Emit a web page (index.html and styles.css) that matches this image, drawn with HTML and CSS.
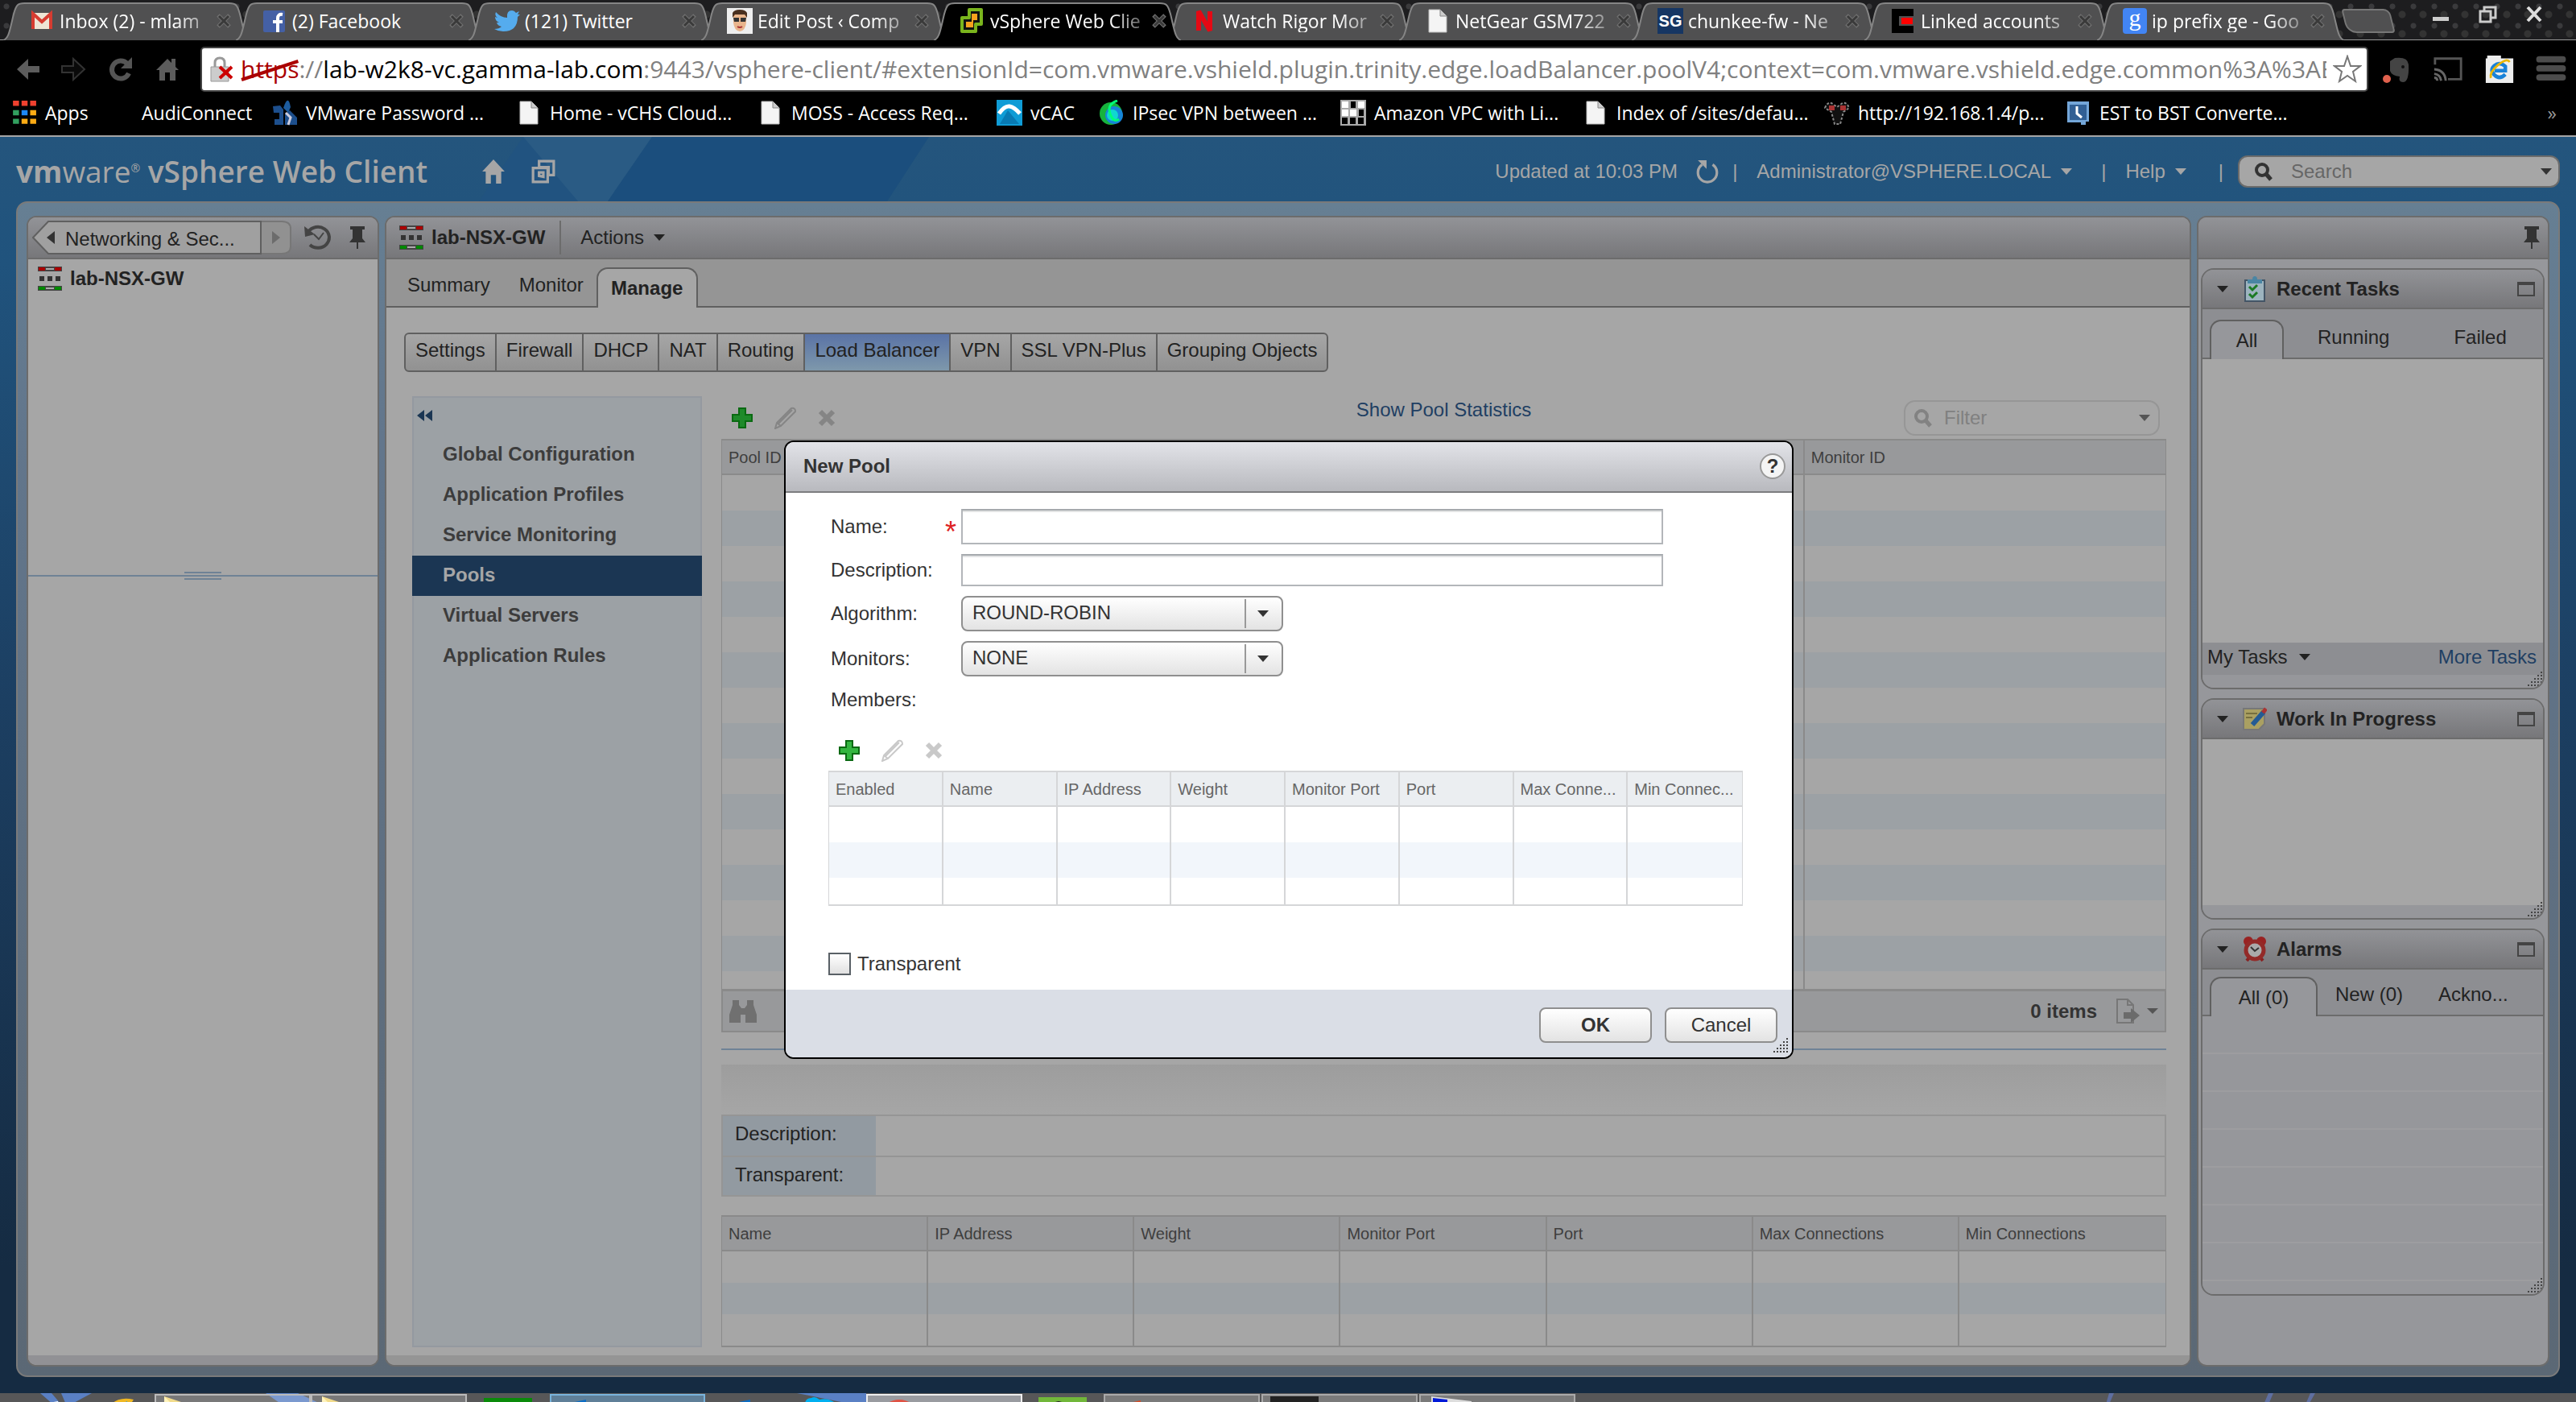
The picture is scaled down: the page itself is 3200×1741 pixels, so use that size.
FILE: index.html
```
<!DOCTYPE html>
<html lang="en">

<head>
    <meta charset="UTF-8">
    <meta name="viewport" content="width=device-width, initial-scale=1.0">
    <title>vSphere Web Client</title>
    <link rel="stylesheet" href="styles.css">
</head>

<body>
    <!-- shared icons -->
    <svg class="defs" aria-hidden="true">
        <symbol id="tab-shape" viewBox="0 0 306 46" preserveAspectRatio="none">
            <path d="M0 46C7 44 8 34 13 14C16 3 18 1 26 1H280C288 1 290 3 293 14C298 34 299 44 306 46" stroke-width="2" />
        </symbol>
        <symbol id="close" viewBox="0 0 18 18">
            <path d="M2 2L16 16M16 2L2 16" stroke="#707070" stroke-width="5" />
            <path d="M3 3L15 15M15 3L3 15" stroke="#3a3a3a" stroke-width="3" />
        </symbol>
        <symbol id="page" viewBox="0 0 28 32">
            <path d="M3 2H17L25 10V30H3Z" fill="#f4f4f4" stroke="#bbb" />
            <path d="M17 2V10H25" fill="#ccc" stroke="#888" />
        </symbol>
        <symbol id="gateway" viewBox="0 0 30 30">
            <path d="M0 0H30V6H0Z" fill="#444" />
            <path d="M1 1H9V5H1ZM21 1H29V5H21Z" fill="#a00" />
            <path d="M10 2H20V4H10Z" fill="#aaa" />
            <path d="M2 12H8V18H2ZM12 12H18V18H12ZM22 12H28V18H22Z" fill="#333" />
            <path d="M0 24H30V30H0Z" fill="#444" />
            <path d="M1 25H9V29H1ZM21 25H29V29H21Z" fill="#080" />
            <path d="M10 26H20V28H10Z" fill="#aaa" />
        </symbol>
        <symbol id="pin" viewBox="0 0 20 28">
            <path d="M1 0H19V4H16V15L20 20H0L4 15V4H1Z" fill="currentColor" />
            <path d="M9 20H11V28H9Z" fill="currentColor" />
        </symbol>
        <symbol id="plus" viewBox="0 0 28 28">
            <path d="M10 2H18V10H26V18H18V26H10V18H2V10H10Z" fill="currentColor" stroke="#0a6a12" stroke-width="2" />
        </symbol>
        <symbol id="pencil" viewBox="0 0 28 28">
            <path d="M1 27L3 20L21 2Q26 1 26 6L8 24ZM5 21L22 4M3 20L8 24" fill="none" stroke="currentColor" stroke-width="2" />
        </symbol>
        <symbol id="cross" viewBox="0 0 22 22">
            <path d="M3 3L19 19M19 3L3 19" stroke="currentColor" stroke-width="6" />
        </symbol>
        <symbol id="magnifier" viewBox="0 0 24 24">
            <circle cx="10" cy="10" r="7" fill="none" stroke="currentColor" stroke-width="4" />
            <path d="M15 15L21 22" stroke="currentColor" stroke-width="5" />
        </symbol>
        <symbol id="caret" viewBox="0 0 14 8">
            <path d="M0 0H14L7 8Z" fill="currentColor" />
        </symbol>
        <symbol id="grip" viewBox="0 0 20 20">
            <path d="M18 0V20M14 4V20M10 8V20M6 12V20M2 16V20" stroke="currentColor" stroke-width="2" stroke-dasharray="2 2" />
        </symbol>
        <symbol id="maximize" viewBox="0 0 22 18">
            <path d="M1 2H21V17H1Z" fill="none" stroke="#444" stroke-width="2" />
            <path d="M0 0H22V4H0Z" fill="#444" />
        </symbol>
        <symbol id="folder" viewBox="0 0 40 14">
            <path d="M0 14V0L24 8Q34 10 36 14Z" fill="#f2dc8c" />
            <path d="M0 0L14 14H0Z" fill="#fff3bd" />
        </symbol>
    </svg>

    <header class="browser">
        <div class="tab-strip">
            <div class="tab">
                <svg class="shape"><use href="#tab-shape" /></svg>
                <svg class="fav" viewBox="0 0 32 32"><path d="M3 6H29V26H3Z" fill="#eee5d5" /><path d="M5 26V7L16 17L27 7V26" fill="none" stroke="#d63c31" stroke-width="4" /></svg>
                <span class="name fade">Inbox (2) - mlam</span>
                <button class="close" aria-label="Close tab"><svg><use href="#close" /></svg></button>
            </div>
            <div class="tab">
                <svg class="shape"><use href="#tab-shape" /></svg>
                <svg class="fav" viewBox="0 0 32 32"><rect x="2" y="3" width="27" height="27" rx="2" fill="#4460a5" /><path d="M26 8Q20 7 20 13V30M14 17H26" fill="none" stroke="#fff" stroke-width="4" /></svg>
                <span class="name">(2) Facebook</span>
                <button class="close" aria-label="Close tab"><svg><use href="#close" /></svg></button>
            </div>
            <div class="tab">
                <svg class="shape"><use href="#tab-shape" /></svg>
                <svg class="fav" viewBox="0 0 32 32"><path d="M2 5Q8 12 16 12Q15 3 22 3Q25 3 27 6L31 4L29 8L32 8L29 11Q29 29 11 29Q5 29 0 26Q6 26 9 23Q4 22 3 18H6Q1 16 1 11L4 12Q0 9 2 5Z" fill="#55acee" /></svg>
                <span class="name">(121) Twitter</span>
                <button class="close" aria-label="Close tab"><svg><use href="#close" /></svg></button>
            </div>
            <div class="tab">
                <svg class="shape"><use href="#tab-shape" /></svg>
                <svg class="fav" viewBox="0 0 32 32"><path d="M0 0H32V32H0Z" fill="#eee" /><path d="M8 8H24V18Q23 28 16 29Q9 28 8 18Z" fill="#e9b58c" /><path d="M7 12V6Q9 2 16 2T25 6V12L22 8H10Z" fill="#49301f" /><path d="M8 12H15V17H9ZM17 12H24L23 17H17Z" fill="#333" /><path d="M13 23Q16 25 19 23" fill="none" stroke="#a33" stroke-width="2" /></svg>
                <span class="name fade">Edit Post ‹ Comp</span>
                <button class="close" aria-label="Close tab"><svg><use href="#close" /></svg></button>
            </div>
            <div class="tab active">
                <svg class="shape"><use href="#tab-shape" /></svg>
                <svg class="fav" viewBox="0 0 32 32"><path d="M12 2H27V20H20V29H3V12H12Z" fill="#111" stroke="#7ab51d" stroke-width="4" stroke-linejoin="round" /><path d="M15 7H22V15H17V24H8V17H15Z" fill="#f8a11d" /></svg>
                <span class="name fade">vSphere Web Clie</span>
                <button class="close" aria-label="Close tab"><svg><use href="#close" /></svg></button>
            </div>
            <div class="tab">
                <svg class="shape"><use href="#tab-shape" /></svg>
                <svg class="fav" viewBox="0 0 32 32"><path d="M8 28V4L22 28V4" fill="none" stroke="#e50914" stroke-width="6" stroke-linejoin="bevel" /></svg>
                <span class="name fade">Watch Rigor Mor</span>
                <button class="close" aria-label="Close tab"><svg><use href="#close" /></svg></button>
            </div>
            <div class="tab">
                <svg class="shape"><use href="#tab-shape" /></svg>
                <svg class="fav"><use href="#page" /></svg>
                <span class="name fade">NetGear GSM722</span>
                <button class="close" aria-label="Close tab"><svg><use href="#close" /></svg></button>
            </div>
            <div class="tab">
                <svg class="shape"><use href="#tab-shape" /></svg>
                <span class="fav fav-sg">SG</span>
                <span class="name fade">chunkee-fw - Ne</span>
                <button class="close" aria-label="Close tab"><svg><use href="#close" /></svg></button>
            </div>
            <div class="tab">
                <svg class="shape"><use href="#tab-shape" /></svg>
                <svg class="fav" viewBox="0 0 32 32"><path d="M2 1H29V10H11V22H29V31H2Z" fill="#000" /><path d="M14 12H28V20H14Z" fill="#f00" /></svg>
                <span class="name fade">Linked accounts</span>
                <button class="close" aria-label="Close tab"><svg><use href="#close" /></svg></button>
            </div>
            <div class="tab">
                <svg class="shape"><use href="#tab-shape" /></svg>
                <span class="fav fav-google">g</span>
                <span class="name fade">ip prefix ge - Goo</span>
                <button class="close" aria-label="Close tab"><svg><use href="#close" /></svg></button>
            </div>
            <button class="new-tab" aria-label="New tab"></button>
            <div class="window-buttons">
                <button aria-label="Minimize"><svg viewBox="0 0 24 24"><path d="M2 15H22V20H2Z" fill="#ccc" /></svg></button>
                <button aria-label="Restore"><svg viewBox="0 0 24 24"><path d="M8 7V3H22V16H17M3 8H16V21H3Z" fill="none" stroke="#ccc" stroke-width="3" /></svg></button>
                <button aria-label="Close"><svg viewBox="0 0 24 24"><path d="M4 3L20 20M20 3L4 20" stroke="#ddd" stroke-width="4" /></svg></button>
            </div>
        </div>

        <div class="toolbar">
            <button aria-label="Back"><svg viewBox="0 0 32 32"><path d="M17 3L3 16L17 29V20H31V12H17Z" fill="#5c5c5c" /></svg></button>
            <button aria-label="Forward"><svg viewBox="0 0 32 32"><path d="M15 3L29 16L15 29V20H1V12H15Z" fill="#0a0a0a" stroke="#333" stroke-width="2" /></svg></button>
            <button aria-label="Reload"><svg viewBox="0 0 32 32"><path d="M26 21A11 11 0 1 1 24 9" fill="none" stroke="#555" stroke-width="6" /><path d="M30 1V15H16Z" fill="#555" /></svg></button>
            <button aria-label="Home"><svg viewBox="0 0 32 32"><path d="M2 17L16 3L21 8V3H26V13L30 17H26V30H19V20H13V30H6V17Z" fill="#5c5c5c" /></svg></button>
            <div class="url-box">
                <svg class="lock" viewBox="0 0 30 32"><path d="M6 14V8Q6 2 12 2T18 8V14" fill="none" stroke="#999" stroke-width="3" /><path d="M1 13H23V31H1Z" fill="#ccc" stroke="#999" /><path d="M12 13L27 27M27 13L12 27" stroke="#c00" stroke-width="4" /></svg>
                <div class="url"><span class="scheme">https<svg viewBox="0 0 70 28" preserveAspectRatio="none"><path d="M1 26L69 3" stroke="#a00" stroke-width="4" /></svg></span>://<span class="host">lab-w2k8-vc.gamma-lab.com</span>:9443/vsphere-client/#extensionId=com.vmware.vshield.plugin.trinity.edge.loadBalancer.poolV4;context=com.vmware.vshield.edge.common%3A%3AE</div>
                <button class="star" aria-label="Bookmark"><svg viewBox="0 0 36 36"><path d="M18 2L22 14H34L25 21L28 33L18 26L8 33L11 21L2 14H14Z" fill="#fff" stroke="#777" stroke-width="2" /></svg></button>
            </div>
            <div class="extensions">
                <button aria-label="Notes"><svg viewBox="0 0 36 36"><path d="M10 8L16 4Q32 2 33 12Q34 34 26 34Q20 34 22 27Q12 26 10 20Z" fill="#444" /><circle cx="26" cy="15" r="2" fill="#111" /><circle cx="6" cy="30" r="5" fill="#e0614d" /></svg></button>
                <button aria-label="Cast"><svg viewBox="0 0 40 36"><path d="M3 12V4H37V31H20" fill="none" stroke="#555" stroke-width="3" /><path d="M2 18Q16 19 17 33M2 24Q10 25 11 33M2 29Q6 29 6 33" fill="none" stroke="#666" stroke-width="3" /></svg></button>
                <button aria-label="IE Tab"><svg viewBox="0 0 40 40"><path d="M1 5H3V1H22V5H39V39H1Z" fill="#eee" /><path d="M28 27Q20 35 13 28T13 15T28 16V22H13" fill="none" stroke="#1982d8" stroke-width="5" /><path d="M8 32Q6 24 18 14T34 10" fill="none" stroke="#e9b600" stroke-width="3" /></svg></button>
                <button aria-label="Menu"><svg viewBox="0 0 34 32"><path d="M4 5H30M4 15H30M4 25H30" stroke="#4c4c4c" stroke-width="7" stroke-linecap="round" /></svg></button>
            </div>
        </div>

        <nav class="bookmarks">
            <a href="#"><svg class="fav" viewBox="0 0 30 30"><path d="M2 1H9V7H2ZM12 1H19V7H12ZM22 1H29V7H22Z" fill="#f0412f" /><path d="M2 12H9V18H2ZM2 22H9V28H2Z" fill="#32a05f" /><path d="M12 12H19V18H12Z" fill="#1d87f5" /><path d="M22 12H29V18H22ZM12 22H19V28H12ZM22 22H29V28H22Z" fill="#fbab14" /></svg>Apps</a>
            <a href="#">AudiConnect</a>
            <a href="#"><svg class="fav" viewBox="0 0 32 32"><path d="M14 10Q20 -8 23 9L20 16Z" fill="#1d5c9f" /><path d="M1 8L10 7L14 12V31H3V24H9V16H2ZM16 18L22 13L31 22V31H16Z" fill="#1d4f8d" /><path d="M17 16L23 22L20 31" fill="none" stroke="#ccd" stroke-width="3" /></svg>VMware Password ...</a>
            <a href="#"><svg class="fav"><use href="#page" /></svg>Home - vCHS Cloud...</a>
            <a href="#"><svg class="fav"><use href="#page" /></svg>MOSS - Access Req...</a>
            <a href="#"><svg class="fav" viewBox="0 0 32 32"><path d="M0 0H32V32H0Z" fill="#0f9cd6" /><path d="M3 17Q10 7 16 8T29 17" fill="none" stroke="#fff" stroke-width="5" /><path d="M4 30L14 13L28 30Z" fill="#087ab3" /></svg>vCAC</a>
            <a href="#"><svg class="fav" viewBox="0 0 32 32"><circle cx="15" cy="17" r="14" fill="#17b33d" /><circle cx="19" cy="19" r="11" fill="#1685d8" /><circle cx="17" cy="19" r="7" fill="#10d7d0" /><path d="M23 1Q10 5 14 17T25 24" fill="none" stroke="#0f7" stroke-width="3" /></svg>IPsec VPN between ...</a>
            <a href="#"><svg class="fav" viewBox="0 0 32 32"><path d="M0 0H32V32H0Z" fill="#aaa" /><path d="M2 2H10V10H2ZM22 2H30V10H22ZM2 12H10V20H2ZM12 12H20V20H12Z" fill="#fff" /><path d="M13 2H19V10H13ZM23 12H29V20H23ZM2 22H9V30H2ZM12 22H19V30H12ZM22 22H29V30H22Z" fill="#000" /></svg>Amazon VPC with Li...</a>
            <a href="#"><svg class="fav"><use href="#page" /></svg>Index of /sites/defau...</a>
            <a href="#"><svg class="fav" viewBox="0 0 32 32"><path d="M1 10Q5 0 12 6L16 9L20 6Q27 0 31 10L24 15L20 30H13L9 15Z" fill="#111" stroke="#888" stroke-width="2" stroke-dasharray="3 2" /><path d="M6 7H13V13H6ZM20 7H27V13H20Z" fill="#a33" /></svg>http://192.168.1.4/p...</a>
            <a href="#"><svg class="fav" viewBox="0 0 32 32"><path d="M2 2H29V27H25V31H19V28H2Z" fill="#74a6d8" /><path d="M5 6H26V25H5Z" fill="#315f94" /><path d="M14 8V17L20 22" fill="none" stroke="#fff" stroke-width="3" /></svg>EST to BST Converte...</a>
            <button class="more" aria-label="More bookmarks">»</button>
        </nav>
    </header>

    <main class="app">
        <svg class="wedges" viewBox="0 0 1200 80" aria-hidden="true">
            <path d="M650 0L595 80H720Z" fill="#215380" />
            <path d="M650 0H810L755 80H718Z" fill="#2a5b84" />
            <path d="M810 0H1154L1102 80H755Z" fill="#1b4e7d" />
        </svg>

        <div class="app-header">
            <h1><b>vm</b>ware<sup>®</sup> <span>vSphere Web Client</span></h1>
            <button aria-label="Home"><svg class="head-icon" viewBox="0 0 28 28"><path d="M14 0L27 14H23V28H17V18H11V28H5V14H1Z" fill="#a6a6a6" /></svg></button>
            <button aria-label="Copy view"><svg class="head-icon" viewBox="0 0 28 28"><path d="M9 2H26V18H20V9H9ZM2 10H19V26H2ZM9 19V15H14V20Z" fill="none" stroke="#a6a6a6" stroke-width="3" /></svg></button>
            <div class="session">
                <span>Updated at 10:03 PM</span>
                <button class="refresh" aria-label="Refresh"><svg class="head-icon" viewBox="0 0 28 28"><path d="M8 6A11 11 0 1 0 20 6" fill="none" stroke="#a6a6a6" stroke-width="3" /><path d="M3 1H13V11Z" fill="#a6a6a6" /></svg></button>
                <span class="bar">|</span>
                <button class="user">Administrator@VSPHERE.LOCAL <svg class="caret"><use href="#caret" /></svg></button>
                <span class="bar">|</span>
                <button class="help-menu">Help <svg class="caret"><use href="#caret" /></svg></button>
                <span class="bar">|</span>
            </div>
            <label class="search">
                <svg class="magnifier"><use href="#magnifier" /></svg>
                <input type="text" placeholder="Search" aria-label="Search">
                <svg class="caret"><use href="#caret" /></svg>
            </label>
        </div>

        <div class="frame">
            <!-- navigator -->
            <aside class="panel navigator">
                <div class="panel-head">
                    <div class="crumbs">
                        <svg viewBox="0 0 322 42" preserveAspectRatio="none"><path d="M284 1H310Q321 1 321 10V32Q321 41 310 41H284Z" fill="#919191" stroke="#777" stroke-width="2" /><path d="M1 21L20 1H284V41H20Z" fill="#a0a0a0" stroke="#606060" stroke-width="2" /><path d="M18 21L28 13V29Z" fill="#333" /><path d="M298 13L308 21L298 29Z" fill="#6c6c6c" /></svg>
                        <button>Networking &amp; Sec...</button>
                    </div>
                    <button aria-label="History"><svg class="history" viewBox="0 0 34 32"><path d="M5 9A14 13 0 1 1 7 25" fill="none" stroke="#444" stroke-width="4" /><path d="M0 2L13 12L1 15Z" fill="#444" /><path d="M12 12L18 18L24 10" fill="none" stroke="#444" stroke-width="2" /></svg></button>
                    <button aria-label="Pin"><svg class="pin"><use href="#pin" /></svg></button>
                </div>
                <div class="tree"><a href="#"><svg class="gateway"><use href="#gateway" /></svg>lab-NSX-GW</a></div>
                <div class="splitter"><i></i></div>
                <div class="tree-rest"></div>
                <div class="panel-foot"></div>
            </aside>

            <!-- object view -->
            <section class="panel content">
                <div class="panel-head">
                    <svg class="gateway"><use href="#gateway" /></svg>
                    <h2>lab-NSX-GW</h2>
                    <button class="actions">Actions <svg class="caret"><use href="#caret" /></svg></button>
                </div>
                <div class="main-tabs">
                    <button>Summary</button>
                    <button>Monitor</button>
                    <button class="active">Manage</button>
                </div>
                <div class="sub-tabs">
                    <button>Settings</button><button>Firewall</button><button>DHCP</button><button>NAT</button><button>Routing</button><button class="active">Load Balancer</button><button>VPN</button><button>SSL VPN-Plus</button><button>Grouping Objects</button>
                </div>
                <div class="work">
                    <nav class="side-nav">
                        <button class="collapse" aria-label="Collapse"><svg viewBox="0 0 20 14"><path d="M9 0V14L0 7ZM19 0V14L10 7Z" fill="#1b3653" /></svg></button>
                        <a href="#">Global Configuration</a>
                        <a href="#">Application Profiles</a>
                        <a href="#">Service Monitoring</a>
                        <a href="#" class="active">Pools</a>
                        <a href="#">Virtual Servers</a>
                        <a href="#">Application Rules</a>
                    </nav>
                    <div class="pools">
                        <div class="grid-tools">
                            <div class="icons">
                                <button aria-label="Add"><svg class="plus"><use href="#plus" /></svg></button>
                                <button aria-label="Edit"><svg class="pencil"><use href="#pencil" /></svg></button>
                                <button aria-label="Delete"><svg class="cross"><use href="#cross" /></svg></button>
                            </div>
                            <a href="#">Show Pool Statistics</a>
                            <label class="filter">
                                <svg class="magnifier"><use href="#magnifier" /></svg>
                                <input type="text" placeholder="Filter" aria-label="Filter">
                                <svg class="caret"><use href="#caret" /></svg>
                            </label>
                        </div>
                        <table class="grid">
                            <thead><tr><th>Pool ID</th><th>Name</th><th>Algorithm</th><th>Monitor ID</th></tr></thead>
                            <tbody>
                                <tr><td></td><td></td><td></td><td></td></tr>
                                <tr><td></td><td></td><td></td><td></td></tr>
                                <tr><td></td><td></td><td></td><td></td></tr>
                                <tr><td></td><td></td><td></td><td></td></tr>
                                <tr><td></td><td></td><td></td><td></td></tr>
                                <tr><td></td><td></td><td></td><td></td></tr>
                                <tr><td></td><td></td><td></td><td></td></tr>
                                <tr><td></td><td></td><td></td><td></td></tr>
                                <tr><td></td><td></td><td></td><td></td></tr>
                                <tr><td></td><td></td><td></td><td></td></tr>
                                <tr><td></td><td></td><td></td><td></td></tr>
                                <tr><td></td><td></td><td></td><td></td></tr>
                                <tr><td></td><td></td><td></td><td></td></tr>
                                <tr><td></td><td></td><td></td><td></td></tr>
                                <tr class="cut"><td></td><td></td><td></td><td></td></tr>
                            </tbody>
                        </table>
                        <div class="grid-foot">
                            <button aria-label="Find"><svg class="binoculars" viewBox="0 0 34 28"><path d="M4 0H12V6L15 10H19L22 6V0H30V6L34 18V28H20V18H14V28H0V18L4 6Z" fill="#707070" /></svg></button>
                            <b>0 items</b>
                            <button aria-label="Export"><svg class="export" viewBox="0 0 52 32"><path d="M1 1H14L21 8V30H1ZM14 1V8H21" fill="none" stroke="#777" stroke-width="2" /><path d="M9 17H18V12L29 21L18 30V25H9Z" fill="#6b6b6b" /><path d="M38 12H52L45 19Z" fill="#555" /></svg></button>
                        </div>
                        <div class="divider"></div>
                        <div class="band"></div>
                        <dl class="details">
                            <dt>Description:</dt><dd></dd>
                            <dt>Transparent:</dt><dd></dd>
                        </dl>
                        <table class="grid members">
                            <thead><tr><th>Name</th><th>IP Address</th><th>Weight</th><th>Monitor Port</th><th>Port</th><th>Max Connections</th><th>Min Connections</th></tr></thead>
                            <tbody>
                                <tr><td></td><td></td><td></td><td></td><td></td><td></td><td></td></tr>
                                <tr><td></td><td></td><td></td><td></td><td></td><td></td><td></td></tr>
                                <tr><td></td><td></td><td></td><td></td><td></td><td></td><td></td></tr>
                            </tbody>
                        </table>
                    </div>
                </div>
                <div class="panel-foot"></div>
            </section>

            <!-- tasks, work in progress, alarms -->
            <aside class="panel sidebar">
                <div class="panel-head"><button aria-label="Pin"><svg class="pin"><use href="#pin" /></svg></button></div>
                <section class="card tasks">
                    <div class="card-head">
                        <svg class="caret"><use href="#caret" /></svg>
                        <svg class="card-icon" viewBox="0 0 30 32"><path d="M3 5H27V31H3Z" fill="#9db4bf" stroke="#456" stroke-width="2" /><path d="M6 4H12Q12 0 15 0T18 4H24V9H6Z" fill="#4a85a3" /><path d="M8 13L12 17L18 11M8 22L12 26L18 20" fill="none" stroke="#1b7a24" stroke-width="3" /></svg>
                        <h3>Recent Tasks</h3>
                        <button aria-label="Maximize"><svg class="maximize"><use href="#maximize" /></svg></button>
                    </div>
                    <div class="card-tabs"><button class="active">All</button><button>Running</button><button>Failed</button></div>
                    <div class="list"></div>
                    <div class="card-links"><button>My Tasks <svg class="caret"><use href="#caret" /></svg></button><a href="#">More Tasks</a></div>
                    <div class="card-foot"><svg class="grip"><use href="#grip" /></svg></div>
                </section>
                <section class="card progress">
                    <div class="card-head">
                        <svg class="caret"><use href="#caret" /></svg>
                        <svg class="card-icon" viewBox="0 0 30 32"><path d="M1 3H27V22L20 29H1Z" fill="#aaa062" stroke="#777" stroke-width="2" /><path d="M4 9H18M4 14H12" stroke="#77703f" stroke-width="2" /><path d="M12 23L26 7" stroke="#245b94" stroke-width="6" /><path d="M25 8L29 3" stroke="#a33" stroke-width="5" /></svg>
                        <h3>Work In Progress</h3>
                        <button aria-label="Maximize"><svg class="maximize"><use href="#maximize" /></svg></button>
                    </div>
                    <div class="list"></div>
                    <div class="card-foot"><svg class="grip"><use href="#grip" /></svg></div>
                </section>
                <section class="card alarms">
                    <div class="card-head">
                        <svg class="caret"><use href="#caret" /></svg>
                        <svg class="card-icon" viewBox="0 0 30 32"><circle cx="7" cy="6" r="6" fill="#922" /><circle cx="23" cy="6" r="6" fill="#922" /><path d="M5 30L9 25M25 30L21 25" stroke="#822" stroke-width="4" /><circle cx="15" cy="17" r="11" fill="#aaa" stroke="#932a28" stroke-width="5" /><path d="M10 13L15 18L20 14" fill="none" stroke="#333" stroke-width="2" /></svg>
                        <h3>Alarms</h3>
                        <button aria-label="Maximize"><svg class="maximize"><use href="#maximize" /></svg></button>
                    </div>
                    <div class="card-tabs"><button class="active">All (0)</button><button>New (0)</button><button>Ackno...</button></div>
                    <div class="list"></div>
                    <div class="card-foot"><svg class="grip"><use href="#grip" /></svg></div>
                </section>
            </aside>
        </div>
    </main>

    <footer class="taskbar">
        <svg class="glow" viewBox="0 0 3200 14" preserveAspectRatio="none" aria-hidden="true"><path d="M50 0H64L76 14H66ZM76 0H114L88 14H82ZM330 0H370L400 14H350ZM990 0H1076V14H1060Z" fill="#5a80c4" /><path d="M2620 0H2626L2620 14H2616ZM2818 0H2824L2818 14H2812ZM2870 0H2876L2868 14H2864Z" fill="#5f6fa0" /></svg>
        <svg class="task-row" viewBox="0 0 1960 14" aria-hidden="true">
            <path d="M50 14L72 10V14Z" fill="#fff" />
            <path d="M138 14Q148 4 166 8L162 14Z" fill="#f0b823" /><path d="M150 14L158 10V14Z" fill="#2b9be0" />
            <path d="M193 14V2H385V14M387 14V2H579V14" fill="#fff3" stroke="#bbb" stroke-width="2" />
            <use href="#folder" x="204" y="4" width="40" height="14" /><use href="#folder" x="400" y="4" width="40" height="14" />
            <path d="M601 6H661V14H601Z" fill="#0a8a0a" /><path d="M623 14L629 11V14Z" fill="#fff" />
            <path d="M684 14V2H875V14" fill="#5f7f98" stroke="#79b4dc" stroke-width="2" />
            <path d="M700 14L728 8V14ZM904 14L932 8V14Z" fill="#0b6cc4" />
            <path d="M1000 14Q1000 6 1008 6Q1012 3 1018 8Q1030 5 1040 14Z" fill="#00aff0" />
            <path d="M1077 14V2H1269V14" fill="#999ba0" stroke="#eee" stroke-width="2" /><path d="M1100 14Q1117 2 1134 14Z" fill="#e05244" />
            <path d="M1290 5H1350V14H1290Z" fill="#71b73a" /><path d="M1307 14Q1315 6 1323 14Z" fill="#222" />
            <path d="M1372 14V2H1564V14M1568 14V2H1760V14M1764 14V2H1956V14" fill="#7a7a7a" stroke="#aaa" stroke-width="2" />
            <path d="M1394 14L1417 9V14Z" fill="#d84b25" />
            <path d="M1578 4H1638V14H1578Z" fill="#222" />
            <path d="M1778 4L1828 10V14H1778Z" fill="#ddd" /><path d="M1780 6L1798 8V14H1780Z" fill="#0019d8" />
        </svg>
    </footer>

    <!-- new pool dialog -->
    <div class="modal-layer">
        <form class="dialog" role="dialog" aria-labelledby="dialog-title">
            <div class="dialog-head">
                <h2 id="dialog-title">New Pool</h2>
                <button type="button" class="help" aria-label="Help">?</button>
            </div>
            <div class="dialog-body">
                <div class="field"><label for="name">Name:</label><span class="required">*</span><input id="name" type="text"></div>
                <div class="field desc"><label for="description">Description:</label><input id="description" type="text"></div>
                <div class="field"><label for="algorithm">Algorithm:</label>
                    <span class="drop"><select id="algorithm"><option>ROUND-ROBIN</option></select><svg class="caret"><use href="#caret" /></svg></span></div>
                <div class="field"><label for="monitors">Monitors:</label>
                    <span class="drop"><select id="monitors"><option>NONE</option></select><svg class="caret"><use href="#caret" /></svg></span></div>
                <p>Members:</p>
                <div class="icons">
                    <button type="button" aria-label="Add member"><svg class="plus"><use href="#plus" /></svg></button>
                    <button type="button" aria-label="Edit member"><svg class="pencil"><use href="#pencil" /></svg></button>
                    <button type="button" aria-label="Delete member"><svg class="cross"><use href="#cross" /></svg></button>
                </div>
                <table class="grid light">
                    <thead><tr><th>Enabled</th><th>Name</th><th>IP Address</th><th>Weight</th><th>Monitor Port</th><th>Port</th><th>Max Conne...</th><th>Min Connec...</th></tr></thead>
                    <tbody>
                        <tr><td></td><td></td><td></td><td></td><td></td><td></td><td></td><td></td></tr>
                        <tr><td></td><td></td><td></td><td></td><td></td><td></td><td></td><td></td></tr>
                        <tr class="cut"><td></td><td></td><td></td><td></td><td></td><td></td><td></td><td></td></tr>
                    </tbody>
                </table>
                <label class="check"><input type="checkbox">Transparent</label>
            </div>
            <div class="dialog-foot">
                <button type="submit" class="ok">OK</button>
                <button type="button">Cancel</button>
                <svg class="grip"><use href="#grip" /></svg>
            </div>
        </form>
    </div>
</body>

</html>
```
FILE: styles.css
```
* {
    box-sizing: border-box;
}

body {
    margin: 0;
    min-height: 100vh;
    display: flex;
    flex-direction: column;
    position: relative;
    overflow: hidden;
    font-family: "Liberation Sans", Arial, sans-serif;
    font-size: 24px;
    line-height: 28px;
    color: #222;
    background: #152b42;
}

h1, h2, h3, p, dl, dd {
    margin: 0;
    font-size: 24px;
}

a {
    color: inherit;
    text-decoration: none;
}

button {
    padding: 0;
    border: 0;
    background: none;
    color: inherit;
    font: inherit;
    display: flex;
    align-items: center;
    justify-content: center;
}

input, select {
    font: inherit;
    color: inherit;
}

svg {
    display: block;
    flex: none;
}

.defs {
    position: absolute;
    width: 0;
    height: 0;
}

.caret { width: 14px; height: 8px; }
.magnifier { width: 24px; height: 24px; }
.gateway { width: 30px; height: 30px; }
.pin { width: 20px; height: 28px; color: #333; }
.plus { width: 28px; height: 28px; color: #1f8a2a; }
.pencil { width: 28px; height: 28px; color: #858585; }
.cross { width: 22px; height: 22px; color: #858585; }
.grip { width: 20px; height: 20px; color: #444; }
.maximize { width: 22px; height: 18px; }

/* browser */
.browser {
    background: #000;
    color: #fff;
    font-family: "Open Sans", "Noto Sans", sans-serif;
    font-size: 23px;
    border-bottom: 2px solid #a6a6a6;
}

.tab-strip {
    display: flex;
    height: 50px;
    padding: 3px 0 0 4px;
    border-bottom: 1px solid #999;
    background-color: #1d1d1f;
    background-image: radial-gradient(circle at 8px 8px, #3a3a3c 3px, transparent 4px), radial-gradient(circle at 20px 18px, #333 4px, transparent 5px);
    background-size: 26px 24px;
}

.tab {
    position: relative;
    flex: none;
    width: 307px;
    height: 47px;
    margin-right: -18px;
    padding: 0 24px 2px 32px;
    display: flex;
    align-items: center;
    gap: 6px;
}

.tab .shape {
    position: absolute;
    inset: 0;
    width: 100%;
    height: 100%;
    fill: #505051;
    stroke: #858585;
}

.tab.active {
    z-index: 1;
}

.tab.active .shape {
    fill: #000;
}

.fav {
    width: 32px;
    height: 32px;
    position: relative;
}

.fav-sg {
    background: #163663;
    font: bold 20px/32px "Liberation Sans", sans-serif;
    text-align: center;
}

.fav-google {
    background: #4285f4;
    border-radius: 4px;
    font: 30px/24px "Liberation Serif", serif;
    text-align: center;
}

.tab .name {
    position: relative;
    flex: 1;
    white-space: nowrap;
}

.tab .fade {
    mask-image: linear-gradient(90deg, #000 80%, #0006);
}

.tab .close {
    position: relative;
    margin-left: 8px;
}

.close svg {
    width: 18px;
    height: 18px;
}

.new-tab {
    width: 60px;
    height: 30px;
    margin: 8px 0 0 18px;
    background: #505051;
    border: 2px solid #777;
    border-radius: 4px 8px 4px 12px;
    transform: skewX(14deg);
}

.window-buttons {
    display: flex;
    align-items: flex-start;
    gap: 34px;
    margin: 3px 40px 0 auto;
}

.window-buttons svg {
    width: 24px;
    height: 24px;
}

.toolbar {
    height: 71px;
    padding: 7px 12px 7px 17px;
    display: flex;
    align-items: center;
    gap: 24px;
}

.toolbar > button svg {
    width: 34px;
    height: 32px;
}

.url-box {
    flex: 1;
    height: 56px;
    padding: 0 6px 0 10px;
    display: flex;
    align-items: center;
    gap: 8px;
    background: #fff;
    border: 2px solid #444;
    border-radius: 5px;
    color: #808080;
    font-size: 30px;
    line-height: 48px;
}

.lock {
    width: 30px;
    height: 34px;
}

.url {
    flex: 1;
    width: 0;
    overflow: hidden;
    white-space: nowrap;
}

.scheme {
    position: relative;
    color: #a00;
}

.scheme svg {
    position: absolute;
    left: 0;
    top: 8px;
    width: 100%;
    height: 28px;
}

.host {
    color: #000;
}

.star svg {
    width: 36px;
    height: 36px;
}

.extensions {
    display: flex;
    gap: 26px;
    margin-left: -8px;
}

.extensions svg {
    width: 38px;
    height: 36px;
}

.bookmarks {
    height: 47px;
    padding: 0 24px 10px 14px;
    display: grid;
    grid-template-columns: 162px 162px 303px 300px 297px 127px 300px 301px 300px 300px 1fr auto;
    align-items: center;
    white-space: nowrap;
}

.bookmarks a {
    display: flex;
    align-items: center;
    gap: 10px;
}

.more {
    color: #999;
}

/* application shell */
.app {
    flex: 1;
    position: relative;
    display: flex;
    flex-direction: column;
    padding: 0 20px 20px;
    background: linear-gradient(#24557d, #20537d 10%, #1c3f62 45%, #152b42 90%);
}

.wedges {
    position: absolute;
    left: 0;
    top: 0;
    width: 1200px;
    height: 80px;
}

.app-header {
    position: relative;
    height: 80px;
    padding-top: 5px;
    display: flex;
    align-items: center;
    color: #a6a6a6;
}

.app-header h1 {
    font: 37px/44px "Open Sans", "Noto Sans", sans-serif;
    width: 578px;
    white-space: nowrap;
}

.app-header h1 span {
    font-weight: 600;
}

.app-header sup {
    font-size: 14px;
    line-height: 14px;
}

.head-icon {
    width: 30px;
    height: 30px;
    margin-right: 32px;
}

.session {
    margin-left: auto;
    display: flex;
    align-items: center;
}

.session button {
    gap: 12px;
}

.session .refresh {
    margin: 0 16px 0 22px;
}

.session .head-icon {
    margin: 0;
}

.session .user {
    margin: 0 36px 0 24px;
}

.session .help-menu {
    margin: 0 40px 0 24px;
}

.search {
    width: 400px;
    height: 40px;
    margin-left: 18px;
    padding: 0 8px 0 18px;
    display: flex;
    align-items: center;
    gap: 12px;
    background: #a6a6a6;
    border: 2px solid #6b6b6b;
    border-radius: 12px;
    color: #333;
}

.search input,
.filter input {
    flex: 1;
    width: 0;
    border: 0;
    padding: 0 10px;
    background: none;
}

.search input::placeholder {
    color: #666;
}

.frame {
    flex: 1;
    position: relative;
    display: grid;
    grid-template-columns: 438px 1fr 438px;
    gap: 7px;
    padding: 16px 11px 11px;
    border: 2px solid #7a7a7a;
    border-radius: 14px;
    background: linear-gradient(#667f93, #62768c 20%, #5b6875);
}

.panel {
    display: flex;
    flex-direction: column;
    border: 2px solid #6c6c6c;
    border-radius: 12px;
    overflow: hidden;
    background: #a6a6a6;
}

.panel-head {
    height: 52px;
    flex: none;
    display: flex;
    align-items: center;
    border-bottom: 2px solid #6c6c6c;
    background: linear-gradient(#929397, #77777a);
}

.panel-foot {
    height: 12px;
    background: #959595;
}

/* navigator */
.crumbs {
    position: relative;
    width: 322px;
    margin: 0 16px 0 5px;
}

.crumbs svg {
    width: 322px;
    height: 42px;
}

.crumbs button {
    position: absolute;
    left: 41px;
    top: 9px;
}

.history {
    width: 34px;
    height: 32px;
    margin-right: 22px;
}

.tree {
    height: 392px;
    padding: 9px 12px;
}

.tree a {
    display: flex;
    align-items: center;
    gap: 10px;
    font-weight: bold;
}

.splitter {
    height: 2px;
    background: #6f8296;
    display: flex;
    align-items: center;
    justify-content: center;
}

.splitter i {
    width: 46px;
    height: 10px;
    flex: none;
    border: solid #6f8296;
    border-width: 2px 0;
}

.tree-rest {
    flex: 1;
}

.navigator .panel-foot {
    background: #919195;
}

/* object view */
.content .gateway {
    margin: 0 10px 0 16px;
}

.actions {
    gap: 12px;
    height: 42px;
    margin-left: 18px;
    padding-left: 24px;
    border-left: 2px solid #6c6c6c;
}

.main-tabs {
    height: 60px;
    padding: 10px 0 0 26px;
    display: flex;
    background: #959595;
    box-shadow: inset 0 -2px #606060;
}

.main-tabs button {
    padding-bottom: 6px;
    margin-right: 36px;
}

.main-tabs button:nth-child(2) {
    margin-right: 16px;
}

.main-tabs .active {
    width: 126px;
    padding: 0;
    border: 2px solid #606060;
    border-bottom: 0;
    border-radius: 14px 14px 0 0;
    background: #a6a6a6;
    font-weight: bold;
}

.sub-tabs {
    align-self: flex-start;
    display: flex;
    height: 49px;
    margin: 31px 0 30px 22px;
    border: 2px solid #606060;
    border-radius: 6px;
    overflow: hidden;
    background: linear-gradient(#a6a6a6, #919191);
}

.sub-tabs button {
    padding: 0 12px 5px;
    border-right: 2px solid #606060;
    white-space: nowrap;
}

.sub-tabs button:last-child {
    border-right: 0;
}

.sub-tabs .active {
    background: linear-gradient(#5a73a6, #7e98ab);
}

.work {
    flex: 1;
    display: grid;
    grid-template-columns: 360px 1fr;
    gap: 24px;
    padding: 0 29px 10px 32px;
}

.side-nav {
    background: #9ca1a5;
    border: 2px solid #9499a0;
    font-weight: bold;
    color: #3c3c3c;
}

.collapse {
    height: 46px;
    padding: 0 0 2px 4px;
}

.collapse svg {
    width: 20px;
    height: 14px;
}

.side-nav a {
    display: block;
    margin: 0 -2px;
    padding: 0 0 2px 38px;
    line-height: 48px;
}

.side-nav .active {
    background: #1b3653;
    color: #a6a6a6;
}

.grid-tools {
    height: 53px;
    display: grid;
    grid-template-columns: 1fr auto 1fr;
}

.grid-tools > a {
    color: #1f3f63;
    padding-top: 3px;
}

.icons {
    display: flex;
    align-items: center;
    gap: 26px;
    padding-left: 12px;
}

.filter {
    justify-self: end;
    width: 318px;
    height: 44px;
    margin: 5px 8px 0 0;
    padding: 0 10px;
    display: flex;
    align-items: center;
    border: 2px solid #969696;
    border-radius: 14px;
    color: #555;
}

.filter .magnifier {
    color: #828282;
}

.filter input {
    padding: 0 14px;
}

.filter input::placeholder {
    color: #808080;
}

.grid {
    width: 100%;
    table-layout: fixed;
    border-collapse: separate;
    border-spacing: 0;
    border: 2px solid #8a8a8a;
    border-width: 2px 1px;
}

.grid th {
    height: 43px;
    padding: 0 8px;
    text-align: left;
    font-size: 20px;
    font-weight: normal;
    line-height: 24px;
    white-space: nowrap;
    color: #3e3e3e;
    background: #98999b;
    border-bottom: 2px solid #8a8a8a;
    border-right: 2px solid #8a8a8a;
}

.grid td {
    height: 44px;
    padding: 0;
    border-right: 2px solid #8a8a8a;
}

.grid th:last-child,
.grid td:last-child {
    border-right: 0;
}

.grid tr:nth-child(even) td {
    background: #9ca1a5;
}

.grid .cut td {
    height: 22px;
}

.grid-foot {
    height: 52px;
    padding: 0 8px;
    display: flex;
    align-items: center;
    border: 2px solid #8a8a8a;
    border-top-width: 1px;
    background: #98999b;
    color: #333;
}

.grid-foot b {
    margin: 0 24px 0 auto;
}

.binoculars {
    width: 34px;
    height: 28px;
}

.export {
    width: 52px;
    height: 32px;
}

.divider {
    height: 2px;
    margin: 20px 0 18px;
    background: #6f8296;
}

.band {
    height: 62px;
    background: linear-gradient(#9d9d9d, #a6a6a6);
}

.details {
    display: grid;
    grid-template-columns: 190px 1fr;
    grid-auto-rows: 49px;
    border: 2px solid #959595;
    margin-bottom: 23px;
}

.details dt {
    padding: 8px 0 0 15px;
    background: #929aa1;
}

.details dt:nth-of-type(2),
.details dd:nth-of-type(2) {
    border-top: 2px solid #959595;
}

.members td {
    height: 39px;
}

/* sidebar cards */
.sidebar {
    background: #96979b;
}

.sidebar > .panel-head {
    justify-content: flex-end;
    padding-right: 10px;
}

.card {
    display: flex;
    flex-direction: column;
    margin: 11px 4px 0 3px;
    border: 2px solid #6c6c6c;
    border-radius: 16px;
    overflow: hidden;
}

.tasks { height: 523px; }
.progress { height: 275px; }
.alarms { height: 456px; }

.card-head {
    height: 49px;
    flex: none;
    padding: 0 10px 0 18px;
    display: flex;
    align-items: center;
    border-bottom: 2px solid #6c6c6c;
    background: linear-gradient(#929397, #77777a);
}

.card-icon {
    width: 30px;
    height: 32px;
    margin: 0 12px 0 18px;
}

.card-head h3 {
    flex: 1;
}

.card-tabs {
    height: 62px;
    flex: none;
    padding: 13px 0 0 9px;
    display: flex;
    background: #8d8e92;
    box-shadow: inset 0 -2px #6c6c6c;
}

.card-tabs button {
    margin-left: 42px;
    padding-bottom: 6px;
}

.card-tabs button:last-child {
    margin-left: 80px;
}

.card-tabs .active {
    width: 92px;
    margin: 0;
    padding: 0;
    border: 2px solid #606060;
    border-bottom: 0;
    border-radius: 14px 14px 0 0;
    background: #96979b;
}

.list {
    flex: 1;
    background: #a6a6a6;
}

.card-links {
    height: 40px;
    padding: 0 8px 4px 6px;
    display: flex;
    align-items: center;
    justify-content: space-between;
    background: #8d8e92;
}

.card-links button {
    gap: 14px;
}

.card-links a {
    color: #1f3f63;
}

.card-foot {
    height: 16px;
    display: flex;
    align-items: flex-end;
    justify-content: flex-end;
    background: #96979b;
}

.alarms .card-tabs {
    height: 58px;
    padding-top: 9px;
}

.alarms .card-tabs .active {
    width: 134px;
    margin: 0;
}

.alarms .card-tabs button {
    margin-left: 22px;
}

.alarms .card-tabs button:last-child {
    margin-left: 44px;
}

.alarms .list {
    background: repeating-linear-gradient(#96979b 0 45px, #9d9da0 45px 47px);
}

/* taskbar */
.taskbar {
    position: relative;
    height: 13px;
    overflow: hidden;
    background: #575758;
}

.glow {
    position: absolute;
    left: 0;
    top: 0;
    width: 100%;
    height: 14px;
}

.task-row {
    position: relative;
    width: 1960px;
    height: 14px;
}

/* dialog */
.modal-layer {
    position: absolute;
    inset: 0;
    display: flex;
    justify-content: center;
    align-items: flex-start;
    padding: 547px 0 0 2px;
}

.dialog {
    width: 1254px;
    border: 2px solid #000;
    border-radius: 12px;
    overflow: hidden;
    background: #fff;
    color: #333;
}

.dialog-head {
    height: 63px;
    padding: 0 8px 2px 22px;
    display: flex;
    align-items: center;
    justify-content: space-between;
    border-bottom: 2px solid #7d7d80;
    background: linear-gradient(#e2e3e8, #b8b9be);
}

.help {
    width: 32px;
    height: 32px;
    border: 2px solid #999;
    border-radius: 50%;
    background: #f4f4f4;
    font-weight: bold;
}

.dialog-body {
    padding: 20px 61px 16px 53px;
}

.field {
    display: flex;
    align-items: center;
    height: 44px;
    margin-bottom: 12px;
}

.field label {
    width: 165px;
    padding-left: 3px;
}

.desc {
    height: 40px;
}

.field input {
    width: 872px;
    height: 100%;
    border: 2px solid #b3b6ba;
    border-top: 2px solid #a5a9ad;
    box-shadow: inset 0 2px #e2e3e4;
}

.field .required {
    width: 24px;
    margin-left: -24px;
    padding: 14px 6px 0 0;
    text-align: right;
    color: #d22;
    font-size: 36px;
}

.drop {
    position: relative;
    width: 400px;
    height: 44px;
}

.drop::after {
    content: "";
    position: absolute;
    top: 4px;
    bottom: 4px;
    right: 46px;
    border-left: 2px solid #999;
}

.drop .caret {
    position: absolute;
    right: 18px;
    top: 18px;
}

.drop select {
    appearance: none;
    width: 100%;
    height: 100%;
    padding: 0 12px 2px;
    border: 2px solid #8f8f8f;
    border-radius: 8px;
    background: linear-gradient(#fff, #e3e3e3);
}

.dialog-body p {
    padding: 3px 0 30px 3px;
}

.dialog .icons {
    height: 38px;
    margin-bottom: 6px;
}

.dialog .plus { color: #34b540; }
.dialog .pencil, .dialog .cross { color: #c9c9c9; }

.light, .light th, .light td {
    border-color: #d5d6d8;
}

.light th {
    background: #ebeef1;
    color: #666;
}

.light tr:nth-child(even) td {
    background: #f2f6fb;
}

.light .cut td {
    height: 33px;
}

.check {
    display: flex;
    align-items: center;
    gap: 8px;
    margin-top: 56px;
    height: 32px;
}

.check input {
    appearance: none;
    width: 28px;
    height: 28px;
    margin: 0;
    border: 2px solid #596066;
    background: linear-gradient(#fff, #e0e0e0);
}

.dialog-foot {
    position: relative;
    height: 84px;
    padding: 22px 18px 0 0;
    display: flex;
    justify-content: flex-end;
    gap: 16px;
    background: #dadee6;
}

.dialog-foot button {
    width: 140px;
    height: 44px;
    border: 2px solid #8f8f8f;
    border-radius: 8px;
    background: linear-gradient(#fff, #e3e3e3);
}

.dialog-foot .ok {
    font-weight: bold;
}

.dialog-foot .grip {
    position: absolute;
    right: 4px;
    bottom: 4px;
}
```
